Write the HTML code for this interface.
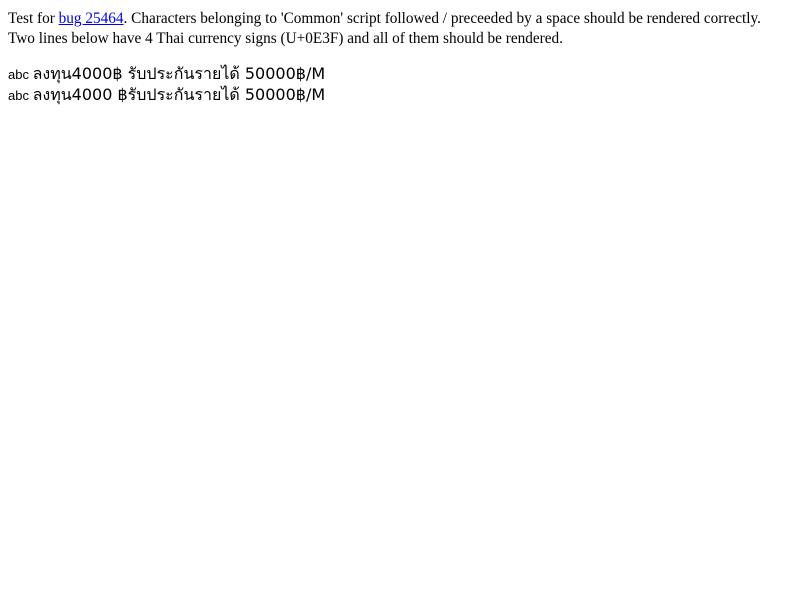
<!DOCTYPE html>
<html><head><meta charset="utf-8"><style>
body{margin:9px 8px 8px 8px;font-family:"Liberation Serif",serif;font-size:15.27px;line-height:20px;color:#000;background:#fff}
p{margin:1px 0 15px 0}
a{color:#00e}
.t{font-family:"Liberation Sans","DejaVu Sans",sans-serif;font-size:13px;line-height:20px}
.th{font-family:"DejaVu Sans","Liberation Sans",sans-serif;font-size:16px}
</style></head><body>
<p>Test for <a href="#">bug 25464</a>. Characters belonging to 'Common' script followed / preceeded by a space should be rendered correctly.<br>Two lines below have 4 Thai currency signs (U+0E3F) and all of them should be rendered.</p>
<div class="t">abc <span class="th">ลงทุน4000฿ รับประกันรายได้ 50000฿/M</span></div>
<div class="t">abc <span class="th">ลงทุน4000 ฿รับประกันรายได้ 50000฿/M</span></div>
</body></html>
